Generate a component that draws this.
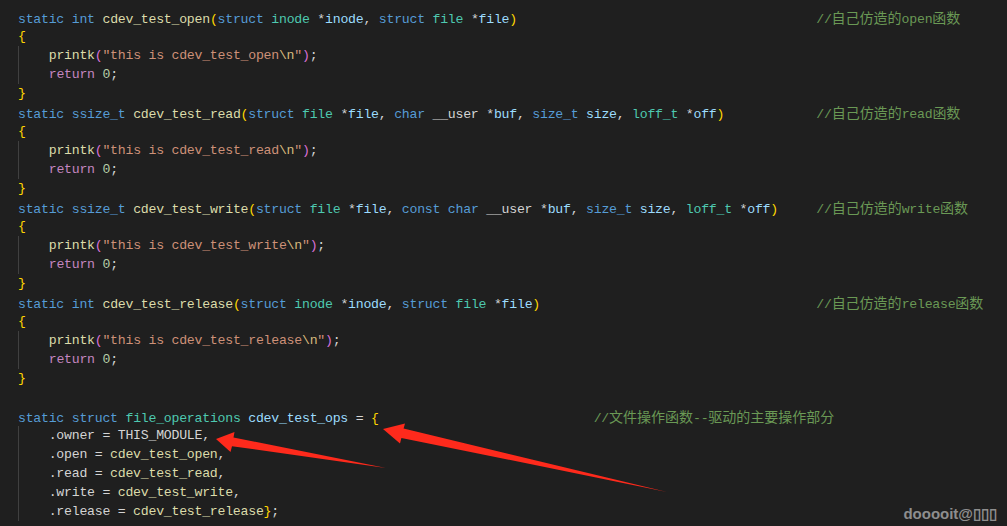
import React from "react";

type Kind = "tx" | "kw" | "ty" | "fn" | "pm" | "b1" | "b2" | "st" | "es" | "rt" | "nm";
type Tok = string | [string, Kind];

const colors: Record<Kind, string> = {
  tx: "text-[#d4d4d4]",
  kw: "text-[#569cd6]",
  ty: "text-[#4ec9b0]",
  fn: "text-[#dcdcaa]",
  pm: "text-[#9cdcfe]",
  b1: "text-[#ffd700]",
  b2: "text-[#da70d6]",
  st: "text-[#ce9178]",
  es: "text-[#d7ba7d]",
  rt: "text-[#c586c0]",
  nm: "text-[#b5cea8]",
};

const k = (s: string): Tok => [s, "kw"];
const t = (s: string): Tok => [s, "ty"];
const f = (s: string): Tok => [s, "fn"];
const p = (s: string): Tok => [s, "pm"];
const g = (s: string): Tok => [s, "b1"];
const m = (s: string): Tok => [s, "b2"];

type Line = { toks: Tok[]; comment?: string; col?: number };

const printk = (name: string): Line => ({
  toks: ["    ", f("printk"), m("("), ['"this is ' + name, "st"], ["\\n", "es"], ['"', "st"], m(")"), ";"],
});
const ret: Line = { toks: ["    ", ["return", "rt"], " ", ["0", "nm"], ";"] };
const open: Line = { toks: [g("{")] };
const close: Line = { toks: [g("}")] };

const lines: Line[] = [
  {
    toks: [k("static"), " ", k("int"), " ", f("cdev_test_open"), g("("), k("struct"), " ", t("inode"), " *", p("inode"), ", ", k("struct"), " ", t("file"), " *", p("file"), g(")")],
    comment: "//自己仿造的open函数",
  },
  open,
  printk("cdev_test_open"),
  ret,
  close,
  {
    toks: [k("static"), " ", k("ssize_t"), " ", f("cdev_test_read"), g("("), k("struct"), " ", t("file"), " *", p("file"), ", ", k("char"), " __user *", p("buf"), ", ", k("size_t"), " ", p("size"), ", ", t("loff_t"), " *", p("off"), g(")")],
    comment: "//自己仿造的read函数",
  },
  open,
  printk("cdev_test_read"),
  ret,
  close,
  {
    toks: [k("static"), " ", k("ssize_t"), " ", f("cdev_test_write"), g("("), k("struct"), " ", t("file"), " *", p("file"), ", ", k("const"), " ", k("char"), " __user *", p("buf"), ", ", k("size_t"), " ", p("size"), ", ", t("loff_t"), " *", p("off"), g(")")],
    comment: "//自己仿造的write函数",
  },
  open,
  printk("cdev_test_write"),
  ret,
  close,
  {
    toks: [k("static"), " ", k("int"), " ", f("cdev_test_release"), g("("), k("struct"), " ", t("inode"), " *", p("inode"), ", ", k("struct"), " ", t("file"), " *", p("file"), g(")")],
    comment: "//自己仿造的release函数",
  },
  open,
  printk("cdev_test_release"),
  ret,
  close,
  { toks: [] },
  {
    toks: [k("static"), " ", k("struct"), " ", t("file_operations"), " ", p("cdev_test_ops"), " = ", g("{")],
    comment: "//文件操作函数--驱动的主要操作部分",
    col: 75,
  },
  { toks: ["    .owner = THIS_MODULE,"] },
  { toks: ["    .open = ", f("cdev_test_open"), ","] },
  { toks: ["    .read = ", f("cdev_test_read"), ","] },
  { toks: ["    .write = ", f("cdev_test_write"), ","] },
  { toks: ["    .release = ", f("cdev_test_release"), g("}"), ";"] },
];

const tokText = (tok: Tok) => (typeof tok === "string" ? tok : tok[0]);

function Comment({ text }: { text: string }) {
  const parts = text.split(/([\u4e00-\u9fff]+)/).filter(Boolean);
  return (
    <span className="text-[#6a9955]">
      {parts.map((part, i) =>
        /[\u4e00-\u9fff]/.test(part) ? (
          <span key={i} className="font-['Noto_Sans_CJK_SC',sans-serif] text-[14px] leading-[19px] tracking-normal">
            {part}
          </span>
        ) : (
          <span key={i}>{part}</span>
        )
      )}
    </span>
  );
}

function CodeLine({ line }: { line: Line }) {
  const len = line.toks.map(tokText).join("").length;
  const indented = tokText(line.toks[0] ?? "").startsWith("    ");
  return (
    <div className={`h-[19px] whitespace-pre ${indented ? "shadow-[inset_1px_0_0_#404040]" : ""}`}>
      {line.toks.map((tok, i) =>
        typeof tok === "string" ? (
          <span key={i} className={colors.tx}>
            {tok}
          </span>
        ) : (
          <span key={i} className={colors[tok[1]]}>
            {tok[0]}
          </span>
        )
      )}
      {line.comment && (
        <>
          <span>{" ".repeat(Math.max(1, (line.col ?? 104) - len))}</span>
          <Comment text={line.comment} />
        </>
      )}
    </div>
  );
}

export default function App() {
  return (
    <div className="relative h-[526px] w-[1007px] overflow-hidden bg-[#1f1f1f]">
      <div className="pl-[18px] pt-[8px] font-['Liberation_Mono',monospace] text-[13.2px] leading-[19px] tracking-[-0.24px] text-[#d4d4d4]">
        {lines.map((line, i) => (
          <CodeLine key={i} line={line} />
        ))}
      </div>

      {/* red annotation arrows */}
      <svg className="pointer-events-none absolute inset-0" width="1007" height="526" viewBox="0 0 1007 526">
        <polygon
          fill="#fe2a1c"
          points="383,429 405,423.5 403.6,428.6 667,492 401.4,437.9 400,443.5"
        />
        <polygon
          fill="#fe2a1c"
          points="216,439 234.5,432 233.5,437.5 386,468 232,446.2 230.5,452"
        />
      </svg>

      <div className="absolute bottom-[1px] right-[10px] font-['Liberation_Sans',sans-serif] text-[15px] font-bold text-[#8e8e8e]">
        dooooit@▯▯▯
      </div>
    </div>
  );
}
